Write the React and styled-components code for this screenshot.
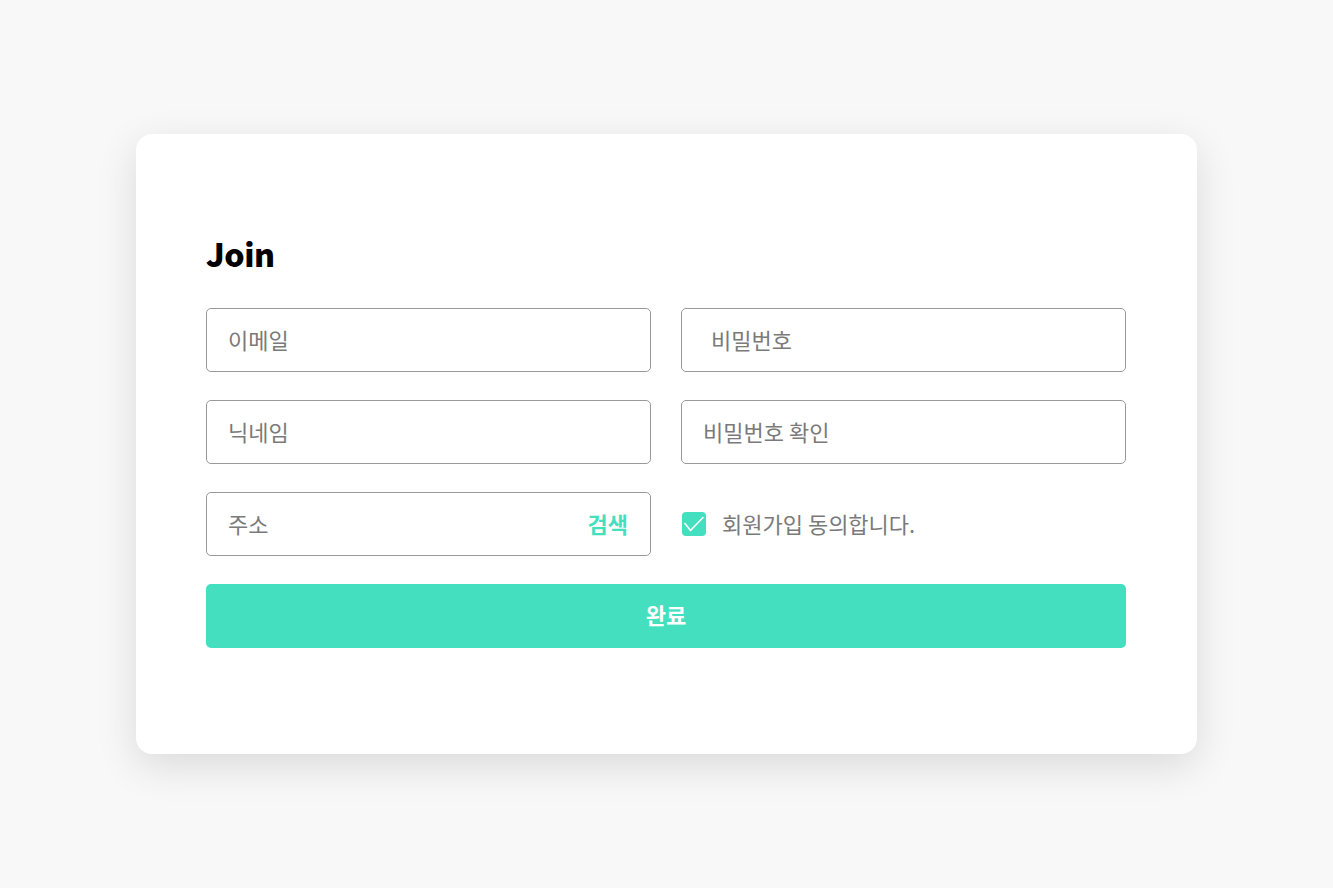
import React from "react";
import styled, { createGlobalStyle } from "styled-components";

const Global = createGlobalStyle`
  html, body { margin: 0; padding: 0; background: #f8f8f8; }
  body { font-family: "Noto Sans CJK KR", "Noto Sans", sans-serif; }
  * { box-sizing: border-box; }
`;

const Page = styled.div`
  min-height: 888px;
  padding-top: 134px;
  display: flex;
  justify-content: center;
  align-items: flex-start;
`;

const Card = styled.form`
  width: 1061px;
  height: 620px;
  background: #fff;
  border-radius: 16px;
  box-shadow: 0 12px 40px rgba(0, 0, 0, 0.12);
  padding: 99px 71px 0 70px;
`;

const Title = styled.h1`
  margin: 0 0 35px;
  font-size: 32px;
  line-height: 40px;
  font-weight: 900;
  color: #000;
  letter-spacing: -0.5px;
`;

const Grid = styled.div`
  display: grid;
  grid-template-columns: 445px 445px;
  column-gap: 30px;
  row-gap: 28px;
`;

const Field = styled.div`
  height: 64px;
  border: 1px solid #999;
  border-radius: 5px;
  display: flex;
  align-items: center;
  padding: 0 22px 3px ${(p) => p.$pl || 21}px;
`;

const Input = styled.input`
  flex: 1;
  min-width: 0;
  border: none;
  outline: none;
  background: transparent;
  font-family: inherit;
  font-size: 22px;
  color: #333;
  padding: 0;
  &::placeholder { color: #7a7a7a; }
`;

const Search = styled.button`
  border: none;
  background: none;
  padding: 0;
  font-family: inherit;
  font-size: 22px;
  font-weight: 700;
  color: #43dfbf;
  cursor: pointer;
`;

const Agree = styled.label`
  display: flex;
  align-items: center;
  gap: 16px;
  padding-left: 1px;
  font-size: 22px;
  color: #7a7a7a;
  cursor: pointer;
`;

const Box = styled.span`
  width: 24px;
  height: 24px;
  border-radius: 4px;
  background: #43dfbf;
  display: flex;
  align-items: center;
  justify-content: center;
`;

const AgreeText = styled.span`
  padding-bottom: 2px;
`;

const Submit = styled.button`
  grid-column: 1 / -1;
  height: 64px;
  border: none;
  border-radius: 5px;
  background: #43dfbf;
  color: #fff;
  font-family: inherit;
  font-size: 22px;
  font-weight: 700;
  padding: 0 0 4px;
  cursor: pointer;
`;

export default function App() {
  return (
    <>
      <Global />
      <Page>
        <Card onSubmit={(e) => e.preventDefault()}>
          <Title>Join</Title>
          <Grid>
            <Field>
              <Input placeholder="이메일" />
            </Field>
            <Field $pl={29}>
              <Input type="password" placeholder="비밀번호" />
            </Field>
            <Field>
              <Input placeholder="닉네임" />
            </Field>
            <Field>
              <Input type="password" placeholder="비밀번호 확인" />
            </Field>
            <Field>
              <Input placeholder="주소" />
              <Search type="button">검색</Search>
            </Field>
            <Agree>
              <Box>
                <svg width="22" height="18" viewBox="0 0 22 18">
                  <path d="M2 8.5 L7.5 15.5 L20 2.5" fill="none" stroke="#fff" strokeWidth="1.6" strokeLinecap="round" strokeLinejoin="round" />
                </svg>
              </Box>
              <AgreeText>회원가입 동의합니다.</AgreeText>
            </Agree>
            <Submit type="submit">완료</Submit>
          </Grid>
        </Card>
      </Page>
    </>
  );
}
